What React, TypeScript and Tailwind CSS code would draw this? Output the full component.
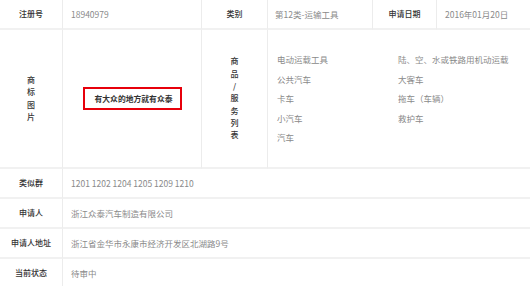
const goodsLeft = ["电动运载工具", "公共汽车", "卡车", "小汽车", "汽车"];
const goodsRight = ["陆、空、水或铁路用机动运载", "大客车", "拖车（车辆）", "救护车", ""];

const infoRows = [
  { label: "类似群", value: "1201 1202 1204 1205 1209 1210" },
  { label: "申请人", value: "浙江众泰汽车制造有限公司" },
  { label: "申请人地址", value: "浙江省金华市永康市经济开发区北湖路9号" },
  { label: "当前状态", value: "待审中" },
];

const font = { fontFamily: '"Noto Sans CJK SC", "Noto Sans", sans-serif' };

function Label({ children }: { children: React.ReactNode }) {
  return (
    <div className="flex items-center justify-center border-r border-b-2 border-r-[#ececec] border-b-[#f1f1f1] text-[#333] text-[8px] font-medium">
      {children}
    </div>
  );
}

function Value({ children, span }: { children: React.ReactNode; span?: string }) {
  return (
    <div className={`flex items-center pl-2 border-b-2 border-b-[#f1f1f1] text-[#8a8a8a] ${span ?? ""}`}>
      {children}
    </div>
  );
}

function Vertical({ text }: { text: string }) {
  return (
    <div className="flex flex-col items-center leading-[12.3px]">
      {text.split("").map((c, i) => (
        <span key={i}>{c}</span>
      ))}
    </div>
  );
}

export default function App() {
  return (
    <div className="w-[530px] h-[286px] overflow-hidden bg-white text-[8.5px]" style={font}>
      <div className="grid grid-cols-[63px_139px_66px_105px_64px_1fr] grid-rows-[30px_139px_30px_30px_30px_30px]">
        {/* 第一行 */}
        <Label>注册号</Label>
        <div className="flex items-center pl-2 border-r border-b-2 border-r-[#ececec] border-b-[#f1f1f1] text-[#8a8a8a]">
          18940979
        </div>
        <Label>类别</Label>
        <div className="flex items-center pl-[7px] border-r border-b-2 border-r-[#ececec] border-b-[#f1f1f1] text-[#8a8a8a]">
          第12类-运输工具
        </div>
        <Label>申请日期</Label>
        <Value>2016年01月20日</Value>

        {/* 商标图片 */}
        <Label>
          <Vertical text="商标图片" />
        </Label>
        <div className="flex items-center justify-center border-r border-b-2 border-r-[#ececec] border-b-[#f1f1f1]">
          <div className="w-[99px] h-[23px] flex items-center justify-center border-2 border-red-600 text-[7.8px] font-bold text-[#333] pl-[3px]">
            有大众的地方就有众泰
          </div>
        </div>
        <Label>
          <Vertical text="商品/服务列表" />
        </Label>
        <div className="col-span-3 border-b-2 border-b-[#f1f1f1] text-[#8a8a8a]">
          <div className="grid grid-cols-[121px_1fr] pl-[9px] pt-[20px] leading-[19.5px]">
            {goodsLeft.map((g, i) => (
              <div key={i} className="contents">
                <span>{g}</span>
                <span>{goodsRight[i]}</span>
              </div>
            ))}
          </div>
        </div>

        {/* 其他信息 */}
        {infoRows.map((r) => (
          <div key={r.label} className="contents">
            <Label>{r.label}</Label>
            <Value span="col-span-5">{r.value}</Value>
          </div>
        ))}
      </div>
    </div>
  );
}
